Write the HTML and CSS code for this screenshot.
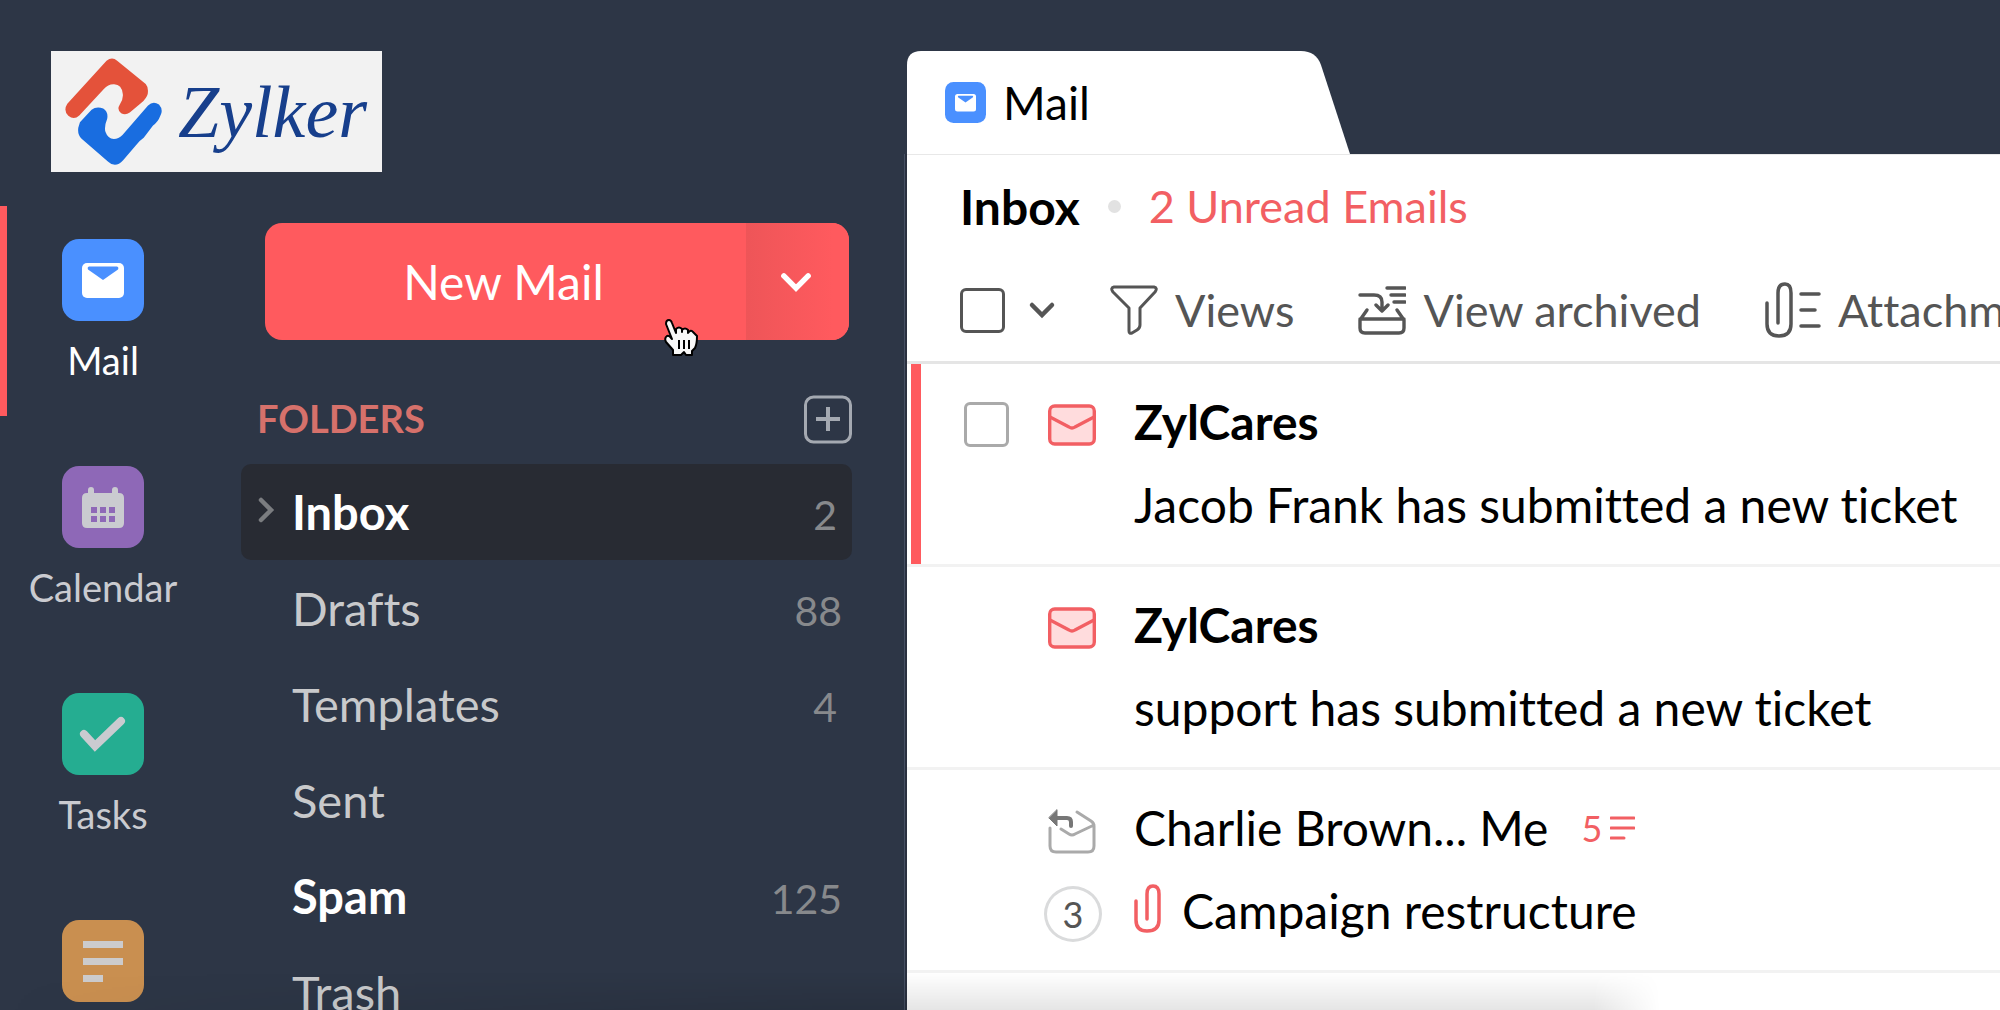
FILE: index.html
```html
<!DOCTYPE html>
<html lang="en">
	<head>
		<meta charset="UTF-8">
		<title>Zylker Mail</title>
		<link rel="stylesheet" href="styles.css">
	</head>
	<body>

		<!-- shared icons -->
		<svg class="sprite" width="0" height="0" aria-hidden="true">
			<symbol id="i-mailapp" viewBox="0 0 82 82">
				<rect width="82" height="82" rx="17" fill="#4a90ff"/>
				<rect x="20" y="24" width="42" height="35" rx="5" fill="#fff"/>
				<path d="M27 27.500H55Q57 28 56 30.500L41 41L26 30.500Q25 28 27 27.500Z" fill="#4a90ff"/>
			</symbol>
			<symbol id="i-unread" viewBox="0 0 48 42">
				<rect x="1.700" y="2" width="44.600" height="38" rx="5" fill="#ffdcdd" stroke="#f25f63" stroke-width="3.400"/>
				<path d="M2 13L21 23Q24 25 27 23L46 13" fill="none" stroke="#f25f63" stroke-width="3.200"/>
			</symbol>
			<symbol id="i-down" viewBox="0 0 28 18">
				<path d="M4 4L14 14L24 4" fill="none" stroke="currentColor" stroke-width="4.500" stroke-linecap="round"/>
			</symbol>
		</svg>

		<div class="app">
			<aside class="side">
				<a class="logo" href="#">
					<svg width="97" height="107" viewBox="195 82 292 322" aria-hidden="true">
						<path d="M320 90Q337 77 352 90L438 160Q447 170 444 190Q441 202 425 217L390 246Q377 255 364 248Q350 238 360 222Q371 205 369 190Q366 162 343 161Q325 160 312 175L238 255Q222 270 205 256Q189 240 202 220Z" fill="#e4523a"/>
						<path d="M240 275L275 238Q290 226 310 234Q326 244 322 265Q312 290 317 305Q324 325 342 326Q356 326 368 314L445 225Q460 210 478 222Q492 238 482 256Q475 275 460 285L432 322Q420 330 408 345L370 390Q347 415 325 394L245 325Q232 312 235 292Z" fill="#196de0"/>
					</svg>
					<span class="logo_name">Zylker</span>
				</a>

				<div class="side_cols">
					<nav class="apps">
						<a class="app_item selected" href="#">
							<svg width="82" height="82"><use href="#i-mailapp"/></svg>
							<span>Mail</span>
						</a>
						<a class="app_item" href="#">
							<svg width="82" height="82" viewBox="0 0 82 82">
								<rect width="82" height="82" rx="17" fill="#8e68b7"/>
								<path d="M25 27H57Q62 27 62 32V57Q62 62 57 62H25Q20 62 20 57V32Q20 27 25 27Z" fill="#cacbd0"/>
								<path d="M29 24V28M53 24V28" stroke="#cacbd0" stroke-width="6" stroke-linecap="round"/>
								<path d="M29 41h6v6h-6zM38 41h6v6h-6zM47 41h6v6h-6zM29 50h6v6h-6zM38 50h6v6h-6zM47 50h6v6h-6z" fill="#8e68b7"/>
							</svg>
							<span>Calendar</span>
						</a>
						<a class="app_item" href="#">
							<svg width="82" height="82" viewBox="0 0 82 82">
								<rect width="82" height="82" rx="17" fill="#25ad91"/>
								<path d="M22 41L33 53L59 28" fill="none" stroke="#cacbd0" stroke-width="8" stroke-linecap="round"/>
							</svg>
							<span>Tasks</span>
						</a>
						<a class="app_item" href="#" aria-label="Notes">
							<svg width="82" height="82" viewBox="0 0 82 82">
								<rect width="82" height="82" rx="17" fill="#c98f50"/>
								<path d="M21 21h40v7h-40zM21 38h40v7h-40zM21 55h20v7h-20z" fill="#cccbcc"/>
							</svg>
						</a>
					</nav>

					<div class="folders">
						<div class="compose">
							<button class="compose_new" type="button">New Mail</button>
							<button class="compose_more" type="button" aria-label="More options">
								<svg width="34" height="22"><use href="#i-down"/></svg>
							</button>
							<svg class="hand" width="36" height="40" viewBox="0 0 36 40" aria-hidden="true">
								<path d="M10 36V32L3 24Q1 20 4 18Q6 17 8 20L9 21L3 6Q3 2 6 2Q8 2 9 5L13 15V11Q16 8 19 11V14V12Q22 9 25 12V15Q28 11 30 14L34 18Q34 26 32 30L29 33V37H23L21 34L18 37H10Z" fill="#f8f8f8" stroke="#000" stroke-width="2" stroke-linejoin="round"/>
								<path d="M16 22V31M21 22V31M26 22V31" stroke="#000" stroke-width="2"/>
							</svg>
						</div>

						<div class="folders_head">
							<h2>FOLDERS</h2>
							<button class="add" type="button" aria-label="Add folder">
								<svg width="48" height="49" viewBox="0 0 48 49">
									<rect x="1.500" y="2" width="45" height="45" rx="8" fill="none" stroke="#a4a9b1" stroke-width="3"/>
									<path d="M24 12V36M12 24H36" stroke="#a4a9b1" stroke-width="4"/>
								</svg>
							</button>
						</div>

						<ul class="folder_list">
							<li class="selected unread">
								<a href="#">
									<svg class="arrow" width="18" height="28" viewBox="0 0 18 28"><path d="M4 4L14 14L4 24" fill="none" stroke="#7b7d80" stroke-width="4.500" stroke-linecap="round"/></svg>
									<span>Inbox</span><em class="single">2</em>
								</a>
							</li>
							<li><a href="#"><span>Drafts</span><em>88</em></a></li>
							<li><a href="#"><span>Templates</span><em class="single">4</em></a></li>
							<li><a href="#"><span>Sent</span></a></li>
							<li class="unread"><a href="#"><span>Spam</span><em>125</em></a></li>
							<li><a href="#"><span>Trash</span></a></li>
						</ul>
					</div>
				</div>
			</aside>

			<main class="main">
				<div class="tab">
					<svg width="41" height="41"><use href="#i-mailapp"/></svg>
					<span>Mail</span>
				</div>

				<section class="panel">
					<header class="head">
						<div class="head_title">
							<h1>Inbox</h1>
							<i class="dot"></i>
							<a href="#">2 Unread Emails</a>
						</div>
						<div class="tools">
							<div class="pick">
								<input class="check" type="checkbox" aria-label="Select all">
								<button type="button" aria-label="Select options">
									<svg width="28" height="18"><use href="#i-down"/></svg>
								</button>
							</div>
							<button type="button">
								<svg width="48" height="50" viewBox="0 0 48 50">
									<path d="M4 2H44Q48 3 45 7L30 23V40Q30 43 27 45L22 48Q19 49 19 46V23L3 7Q0 3 4 2Z" fill="none" stroke="currentColor" stroke-width="3" stroke-linejoin="round"/>
								</svg>
								<span>Views</span>
							</button>
							<button type="button">
								<svg width="48" height="50" viewBox="0 0 48 50" fill="none" stroke="currentColor" stroke-width="3.400" stroke-linecap="round" stroke-linejoin="round">
									<path d="M2 10H16Q24 10 24 17V25M18 20L24 26L30 20M29 3H47M33 10H47M36 17H47"/>
									<path d="M9 25L2 35V43Q2 48 7 48H41Q46 48 46 43V35L39 25M2 34H46"/>
								</svg>
								<span>View archived</span>
							</button>
							<button type="button">
								<svg width="56" height="58" viewBox="0 0 56 58" fill="none" stroke="currentColor" stroke-width="3.500" stroke-linecap="round">
									<path d="M2 22V43Q2 55 14 55Q26 55 26 43V12Q26 3 20 3Q13 3 13 12V42"/>
									<path d="M36 13H54M36 29H50M36 45H54"/>
								</svg>
								<span>Attachments</span>
							</button>
						</div>
					</header>

					<ul class="mails">
						<li class="mail selected new">
							<input class="check" type="checkbox" aria-label="Select mail">
							<svg class="mail_icon" width="48" height="42"><use href="#i-unread"/></svg>
							<h3>ZylCares</h3>
							<p>Jacob Frank has submitted a new ticket</p>
						</li>
						<li class="mail new">
							<svg class="mail_icon" width="48" height="42"><use href="#i-unread"/></svg>
							<h3>ZylCares</h3>
							<p>support has submitted a new ticket</p>
						</li>
						<li class="mail">
							<svg class="mail_icon" width="48" height="46" viewBox="0 0 48 46" fill="none" stroke="#aaa" stroke-width="3" stroke-linecap="round" stroke-linejoin="round">
								<path d="M2 20V38Q2 44 8 44H40Q46 44 46 38V18Q46 15 43 13L29 4M46 17L27 26Q24 28 21 26L13 21"/>
								<path d="M9 10H19Q23 10 23 14V18" stroke="#777" stroke-width="4"/>
								<path d="M9 2V18L1 10Z" fill="#777" stroke="#777" stroke-width="1"/>
							</svg>
							<h3>Charlie Brown... Me
								<span class="thread">5
									<svg width="25" height="24" viewBox="0 0 25 24"><path d="M1 2H24M1 12H24M1 22H14" stroke="#f25f63" stroke-width="3" stroke-linecap="round"/></svg>
								</span>
							</h3>
							<span class="badge">3</span>
							<p>
								<svg class="clip" width="28" height="50" viewBox="0 0 28 50"><path d="M2 17V36Q2 47 13 47Q25 47 25 36V10Q25 2 19 2Q13 2 13 10V35" fill="none" stroke="#f25f63" stroke-width="3.500" stroke-linecap="round"/></svg>
								Campaign restructure
							</p>
						</li>
					</ul>
				</section>
			</main>
		</div>

	</body>
</html>
```
FILE: styles.css
```css
*{padding: 0;margin: 0;box-sizing: border-box;}

li{list-style: none;}
a{color: inherit;text-decoration: none;}
svg{display: block;flex: none;}
button{border: 0;background: none;color: inherit;font: inherit;cursor: pointer;}
em,i{font-style: normal;}

body{background: #2d3646;font-family: Lato,"Liberation Sans",sans-serif;font-size: 48px;font-variant-ligatures: none;height: 100vh;overflow: hidden;}
.sprite{position: absolute;}

.app{display: flex;height: 100vh;overflow: hidden;}


/* left side */
.side{width: 907px;flex: none;padding-top: 51px;}
.logo{display: flex;align-items: center;width: 331px;height: 121px;margin: 0 0 34px 51px;padding-left: 14px;background: #f2f2f2;}
.logo_name{margin-left: 16px;font: italic 74px/100px "Liberation Serif",serif;color: #173f8c;}

.side_cols{display: flex;}
.apps{width: 206px;margin-right: 35px;}
.app_item{display: flex;flex-direction: column;align-items: center;height: 210px;margin-bottom: 17px;padding-top: 33px;font-size: 38px;line-height: 46px;color: #cacbd0;}
.app_item span{margin-top: 16px;}
.app_item.selected{color: #fff;background: linear-gradient(#ff5a5e,#ff5a5e) no-repeat left/7px 100%;}

.folders{width: 611px;padding-top: 17px;}
.compose{display: flex;position: relative;height: 117px;margin: 0 3px 55px 24px;border-radius: 17px;background: #ff5a5e;color: #fff;}
.compose_new{flex: 1;padding-right: 4px;}
.compose_more{display: flex;align-items: center;justify-content: center;width: 103px;padding-right: 4px;border-radius: 0 17px 17px 0;background: linear-gradient(90deg,#ee5558,#ff5a5e 85%);}
.hand{position: absolute;left: 398px;top: 95px;}

.folders_head{display: flex;align-items: center;justify-content: space-between;height: 49px;margin-bottom: 20px;padding-left: 16px;}
.folders_head h2{padding-bottom: 3px;font-size: 38px;color: #d6716b;}

.folder_list a{display: flex;position: relative;align-items: center;justify-content: space-between;height: 96px;padding: 0 10px 0 51px;border-radius: 10px;color: #c8c9cb;}
.folder_list span{font-size: 47px;}
.folder_list em{padding-top: 4px;font-size: 41px;color: #87898c;}
.folder_list .single{padding-right: 5px;}
.folder_list .unread span{font-weight: bold;color: #fff;}
.folder_list .selected a{background: #282b33;}
.folder_list .arrow{position: absolute;left: 16px;top: 32px;}


/* right side */
.main{flex: 1;min-width: 0;display: flex;flex-direction: column;padding-top: 51px;}
.tab{display: flex;align-items: center;width: 443px;height: 103px;padding-left: 38px;background: #fff;color: #000;clip-path: path("M0 103V14Q0 0 14 0H394Q409 0 414 14L443 103Z");}
.tab span{margin-left: 17px;font-size: 46px;}

.panel{flex: 1;background: #fff;box-shadow: -2px 0 0 #2a3140,-3px 0 0 #465063;}
.head{padding: 22px 0 22px 53px;border-top: 1px solid #e8e8e8;border-bottom: 3px solid #e5e5e5;white-space: nowrap;overflow: hidden;}
.head_title{display: flex;align-items: center;height: 58px;margin-bottom: 46px;}
.head_title h1{font-size: 48px;}
.head_title a{font-size: 45px;color: #f25f63;}
.dot{width: 13px;height: 13px;margin: 0 28px;border-radius: 50%;background: #e2e2e2;}

.tools{display: flex;align-items: center;gap: 64px;height: 58px;color: #555;font-size: 45px;}
.tools button{display: flex;align-items: center;gap: 17px;}
.tools .pick button{margin-right: -10px;}
.pick{display: flex;align-items: center;gap: 23px;}
.check{appearance: none;width: 45px;height: 45px;border: 3px solid #aaa;border-radius: 6px;background: #fff;}
.tools .check{border-color: #555;}

.mail{display: grid;grid-template-columns: 84px 86px 1fr;grid-template-rows: 83px 83px;align-items: center;height: 203px;padding: 16px 0 0 57px;border-bottom: 3px solid #f2f2f2;white-space: nowrap;}
.mail.selected{background: linear-gradient(#ff5a5e,#ff5a5e) no-repeat 4px 0/10px 100%;}
.mail .check,.mail_icon,.badge{margin-top: 6px;}
.mail_icon{grid-area: 1/2;}
.mail h3{grid-area: 1/3;display: flex;align-items: center;font-size: 48px;font-weight: normal;}
.mail.new h3{font-weight: bold;}
.mail p{grid-area: 2/3;display: flex;align-items: center;}
.thread{display: flex;align-items: center;gap: 8px;margin-left: 33px;font-size: 36px;color: #f25f63;}
.badge{grid-area: 2/2;width: 58px;height: 56px;margin-left: -4px;border: 3px solid #dadbdc;border-radius: 50%;font-size: 36px;line-height: 50px;text-align: center;color: #555;}
.clip{margin: 0 20px 4px 0;}

/* shade along the bottom edge */
.app::after{content: "";position: fixed;left: 0;bottom: 0;width: 83%;height: 38px;background: linear-gradient(rgba(0,0,0,0),rgba(0,0,0,.1));mask-image: linear-gradient(90deg,transparent,#000 50%,#000 96%,transparent);pointer-events: none;}
```
